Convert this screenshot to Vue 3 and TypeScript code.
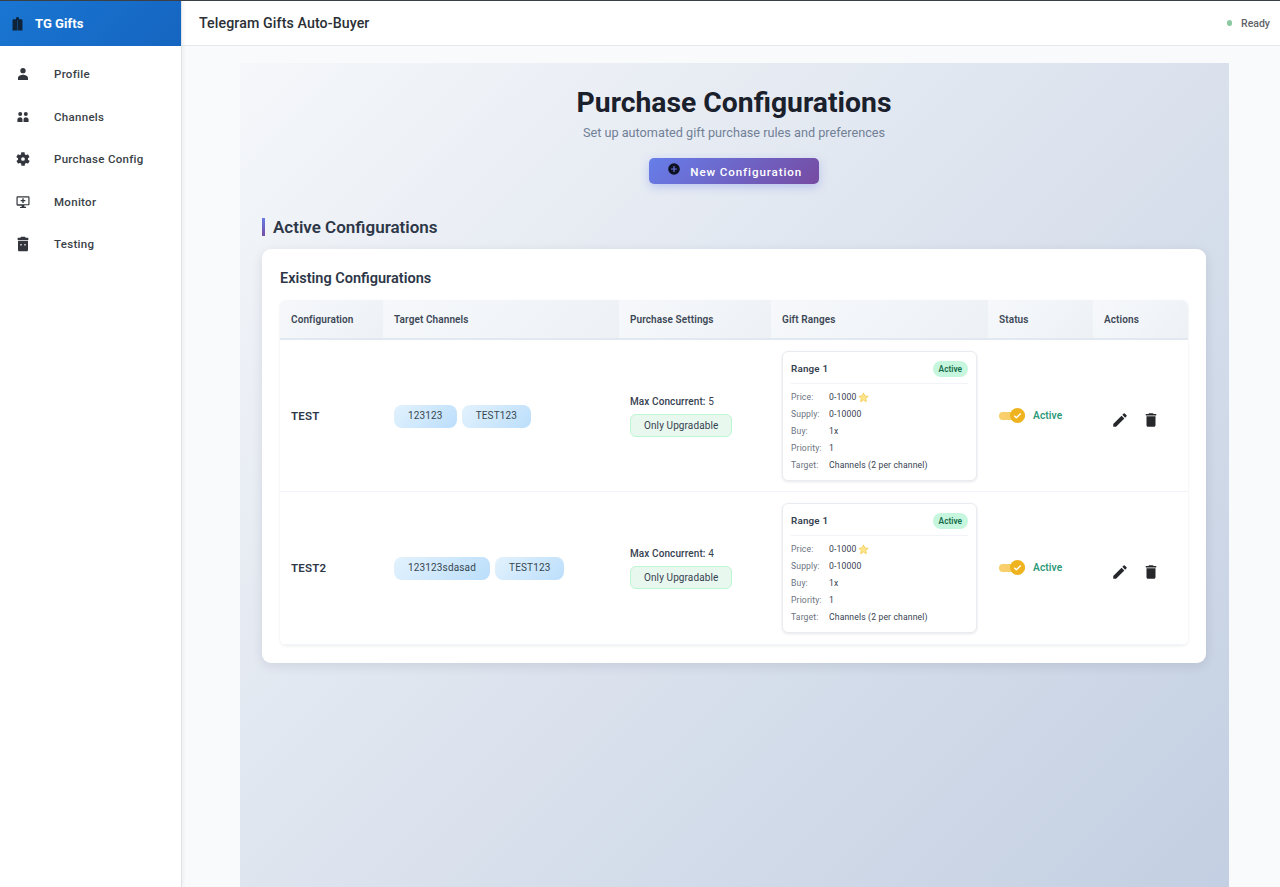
<script setup lang="ts">
interface Config {
  name: string
  channels: string[]
  maxConcurrent: number
}

const navItems = [
  { label: 'Profile', icon: 'M12 3a4 4 0 1 1 0 8 4 4 0 0 1 0-8zM4.500 21v-3.500c0-2.800 5-4.500 7.500-4.500s7.500 1.700 7.500 4.500V21z' },
  { label: 'Channels', icon: 'M7.800 4.500a3 3 0 1 1 0 6 3 3 0 0 1 0-6zm8.400 0a3 3 0 1 1 0 6 3 3 0 0 1 0-6zM3.600 19.500v-3.700c0-2 2.700-3.300 4.200-3.300s3.400 1.300 3.400 3.300v3.700zm9.200 0v-3.700c0-2 1.900-3.300 3.400-3.300s4.200 1.300 4.200 3.300v3.700z' },
  { label: 'Purchase Config', icon: 'M19.400 13c.1-.3.1-.7.1-1s0-.7-.1-1l2.100-1.600c.2-.1.2-.4.1-.6l-2-3.500c-.1-.2-.4-.3-.6-.2l-2.500 1c-.5-.4-1.100-.7-1.700-1l-.4-2.700c0-.2-.2-.4-.5-.4h-4c-.3 0-.5.2-.5.400l-.4 2.700c-.6.200-1.200.6-1.700 1l-2.500-1c-.2-.1-.5 0-.6.200l-2 3.500c-.1.200-.1.500.1.600L4.600 11c-.1.300-.1.700-.1 1s0 .7.1 1l-2.100 1.600c-.2.1-.2.4-.1.6l2 3.500c.1.2.4.3.6.2l2.500-1c.5.4 1.100.7 1.700 1l.4 2.700c0 .2.2.4.5.4h4c.3 0 .5-.2.5-.4l.4-2.700c.6-.2 1.200-.6 1.700-1l2.500 1c.2.1.5 0 .6-.2l2-3.500c.1-.2.1-.5-.1-.6L19.400 13zM12 14.800a2.800 2.800 0 1 1 0-5.600 2.800 2.800 0 0 1 0 5.600z' },
  { label: 'Monitor', icon: 'M4 3.500h16c1 0 1.800.8 1.800 1.800v9.900c0 1-.8 1.800-1.800 1.800h-6v2h2.500V21h-9v-1.500H10v-2H4c-1 0-1.800-.8-1.800-1.800V5.300c0-1 .8-1.800 1.800-1.800zm0 1.800v9.900h16V5.300zM11 6.500h2v2.500h2.500v2H13v2.500h-2V11H8.500V9H11z' },
  { label: 'Testing', icon: 'M9 1h6l1 1.500h4V6H4V2.500h4zM4.500 7h15v14c0 1.100-.9 2-2 2h-11c-1.100 0-2-.9-2-2zm4.500 7.500a1.200 1.200 0 1 0 0-2.400 1.200 1.200 0 0 0 0 2.400zm6 0a1.200 1.200 0 1 0 0-2.400 1.200 1.200 0 0 0 0 2.400z' }
]

const configs: Config[] = [
  { name: 'TEST', channels: ['123123', 'TEST123'], maxConcurrent: 5 },
  { name: 'TEST2', channels: ['123123sdasad', 'TEST123'], maxConcurrent: 4 }
]
</script>

<template>
  <div class="app-shell">
    <aside class="sidebar">
      <div class="brand">
        <svg class="brand-icon" viewBox="0 0 24 24"><path d="M10 3h4v3h3.500c.8 0 1.500.7 1.500 1.500V22H5V7.500C5 6.700 5.700 6 6.500 6H10V3zm1.700 4.500V22h.6V7.500z" fill-rule="evenodd" /></svg>
        <span>TG Gifts</span>
      </div>
      <nav class="nav">
        <div v-for="item in navItems" :key="item.label" class="nav-item">
          <svg class="nav-icon" viewBox="0 0 24 24"><path :d="item.icon" fill-rule="evenodd" /></svg>
          <span>{{ item.label }}</span>
        </div>
      </nav>
    </aside>

    <div class="main">
      <header class="topbar">
        <h1>Telegram Gifts Auto-Buyer</h1>
        <div class="status"><i class="dot"></i>Ready</div>
      </header>

      <div class="content">
        <section class="panel">
          <div class="hero">
            <h2>Purchase Configurations</h2>
            <p>Set up automated gift purchase rules and preferences</p>
            <button class="new-btn">
              <svg viewBox="0 0 24 24"><path d="M12 2a10 10 0 1 0 0 20 10 10 0 0 0 0-20zm5 11h-4v4h-2v-4H7v-2h4V7h2v4h4v2z" /></svg>
              <span>New Configuration</span>
            </button>
          </div>

          <h3 class="section-title">Active Configurations</h3>

          <div class="card">
            <h4>Existing Configurations</h4>
            <div class="table-wrap">
              <table>
                <colgroup>
                  <col style="width: 103px" />
                  <col style="width: 236px" />
                  <col style="width: 152px" />
                  <col style="width: 217px" />
                  <col style="width: 105px" />
                  <col style="width: 96px" />
                </colgroup>
                <thead>
                  <tr>
                    <th>Configuration</th>
                    <th>Target Channels</th>
                    <th>Purchase Settings</th>
                    <th>Gift Ranges</th>
                    <th>Status</th>
                    <th>Actions</th>
                  </tr>
                </thead>
                <tbody>
                  <tr v-for="cfg in configs" :key="cfg.name">
                    <td class="cfg-name">{{ cfg.name }}</td>
                    <td>
                      <div class="chips">
                        <span v-for="ch in cfg.channels" :key="ch" class="chip">{{ ch }}</span>
                      </div>
                    </td>
                    <td class="settings">
                      <div class="concurrent"><b>Max Concurrent:</b> {{ cfg.maxConcurrent }}</div>
                      <span class="upgradable">Only Upgradable</span>
                    </td>
                    <td>
                      <div class="range">
                        <div class="range-head">
                          <strong>Range 1</strong>
                          <span class="range-badge">Active</span>
                        </div>
                        <dl>
                          <dt>Price:</dt><dd>0-1000 <svg class="star" viewBox="0 0 24 24"><path d="M12 2l3 6.600 7.200.8-5.400 4.800 1.500 7.100L12 17.700l-6.300 3.600 1.500-7.100L1.800 9.400 9 8.600z" /></svg></dd>
                          <dt>Supply:</dt><dd>0-10000</dd>
                          <dt>Buy:</dt><dd>1x</dd>
                          <dt>Priority:</dt><dd>1</dd>
                          <dt>Target:</dt><dd>Channels (2 per channel)</dd>
                        </dl>
                      </div>
                    </td>
                    <td>
                      <div class="state">
                        <span class="switch">
                          <span class="knob">
                            <svg viewBox="0 0 24 24"><path d="M5 12.500l4.500 4.500L19 7.500" /></svg>
                          </span>
                        </span>
                        <span class="state-label">Active</span>
                      </div>
                    </td>
                    <td>
                      <div class="actions">
                        <svg viewBox="0 0 24 24"><path d="M3 17.250V21h3.750L17.810 9.940l-3.750-3.750L3 17.250zM20.710 7.040a1 1 0 0 0 0-1.410l-2.340-2.340a1 1 0 0 0-1.410 0l-1.830 1.830 3.750 3.750 1.830-1.830z" /></svg>
                        <svg viewBox="0 0 24 24"><path d="M6 19c0 1.100.9 2 2 2h8c1.100 0 2-.9 2-2V7H6v12zM19 4h-3.500l-1-1h-5l-1 1H5v2h14V4z" /></svg>
                      </div>
                    </td>
                  </tr>
                </tbody>
              </table>
            </div>
          </div>
        </section>
      </div>
    </div>
  </div>
</template>

<style>
html,
body {
  margin: 0;
  height: 100%;
}
</style>

<style scoped>
* {
  box-sizing: border-box;
}

.app-shell {
  display: flex;
  height: 887px;
  overflow: hidden;
  font-family: Roboto, 'Liberation Sans', sans-serif;
  color: #1f2937;
  background: #f8fafc;
  border-top: 1px solid #3b3f46;
}

.sidebar {
  flex: 0 0 182px;
  background: #fff;
  border-right: 1px solid #dfe3e8;
  box-shadow: 1px 0 4px rgba(15, 23, 42, 0.06);
  z-index: 2;
}

.brand {
  display: flex;
  align-items: center;
  gap: 9px;
  height: 45px;
  padding-left: 9px;
  background: linear-gradient(135deg, #1976d2, #1565c0);
  color: #fff;
  font-size: 13px;
  font-weight: 700;
  letter-spacing: 0.05px;
}

.brand-icon {
  width: 17px;
  height: 17px;
  fill: #0e2238;
}

.nav {
  display: flex;
  flex-direction: column;
  padding-top: 7px;
}

.nav-item {
  display: flex;
  align-items: center;
  gap: 23px;
  height: 42.500px;
  padding-left: 15px;
  font-size: 11.500px;
  font-weight: 500;
  letter-spacing: 0.3px;
  color: #3a3f47;
}

.nav-icon {
  width: 16px;
  height: 16px;
  fill: #33373d;
}

.main {
  flex: 1;
  min-width: 0;
  display: flex;
  flex-direction: column;
}

.topbar {
  display: flex;
  align-items: center;
  justify-content: space-between;
  height: 45px;
  flex: none;
  padding: 0 10px 0 17px;
  background: #fff;
  border-bottom: 1px solid #e5e8ec;
}

.topbar h1 {
  margin: 0;
  font-size: 14.200px;
  font-weight: 500;
  letter-spacing: 0.1px;
  color: #2b2f36;
}

.status {
  display: flex;
  align-items: center;
  gap: 9px;
  font-size: 10.500px;
  font-weight: 500;
  color: #5f6368;
}

.dot {
  width: 5.500px;
  height: 5.500px;
  border-radius: 50%;
  background: #8cc9a0;
}

.content {
  flex: 1;
  min-height: 0;
  padding: 17px 51px 0 58px;
}

.panel {
  height: 100%;
  padding: 0 23px 0 22px;
  background: linear-gradient(135deg, #f5f7fa 0%, #c3cfe2 100%);
}

.hero {
  display: flex;
  flex-direction: column;
  align-items: center;
  padding-top: 22px;
}

.hero h2 {
  margin: 0;
  font-size: 28.300px;
  line-height: 36px;
  font-weight: 700;
  color: #1a202c;
}

.hero p {
  margin: 3px 0 0;
  font-size: 12.700px;
  line-height: 17px;
  color: #718096;
}

.new-btn {
  display: flex;
  align-items: center;
  gap: 9px;
  height: 25.500px;
  width: 169.500px;
  margin-top: 17px;
  padding: 0 0 0 18px;
  border: 0;
  border-radius: 5px;
  background: linear-gradient(135deg, #667eea, #764ba2);
  box-shadow: 0 3px 10px rgba(102, 126, 234, 0.35);
  color: #fff;
  font-family: inherit;
  font-size: 11.600px;
  font-weight: 500;
  letter-spacing: 0.9px;
}

.new-btn span {
  padding-top: 2px;
}

.new-btn svg {
  width: 14px;
  height: 14px;
  margin-top: -4px;
  fill: #0f1222;
}

.section-title {
  margin: 34.500px 0 0;
  padding-left: 8px;
  border-left: 3px solid #667eea;
  border-image: linear-gradient(#667eea, #764ba2) 1;
  font-size: 17px;
  line-height: 18px;
  font-weight: 600;
  color: #2d3748;
}

.card {
  margin-top: 13px;
  padding: 19px 18px 18px;
  background: #fff;
  border-radius: 9px;
  box-shadow: 0 3px 12px rgba(15, 23, 42, 0.1);
}

.card h4 {
  margin: 0 0 10px;
  font-size: 14.500px;
  line-height: 22px;
  font-weight: 600;
  color: #2d3748;
}

.table-wrap {
  border-radius: 6px;
  overflow: hidden;
  box-shadow: 0 1px 3px rgba(15, 23, 42, 0.08);
}

table {
  width: 909px;
  table-layout: fixed;
  border-collapse: collapse;
}

th {
  height: 39px;
  padding: 0 11px;
  text-align: left;
  font-size: 10px;
  font-weight: 600;
  letter-spacing: 0.1px;
  color: #3d4856;
  background: linear-gradient(135deg, #f6f8fb, #edf1f6);
  border-bottom: 2px solid #e2e8f0;
}

td {
  height: 152.500px;
  padding: 0 11px;
  vertical-align: middle;
  font-size: 10px;
  border-bottom: 1px solid #f1f5f9;
}

.cfg-name {
  font-size: 11.500px;
  font-weight: 600;
  letter-spacing: 0.2px;
  color: #2d3748;
}

.settings {
  padding-top: 2px;
}

.chips {
  display: flex;
  gap: 5px;
  margin-top: 1px;
}

.chip {
  height: 23px;
  line-height: 22px;
  padding: 0 14px;
  border-radius: 8px;
  background: linear-gradient(135deg, #e3f2fd, #bbdefb);
  font-size: 10px;
  letter-spacing: 0.15px;
  color: #37474f;
}

.concurrent {
  margin-bottom: 7px;
  color: #374151;
  letter-spacing: 0.1px;
}

.concurrent b {
  font-weight: 500;
}

.upgradable {
  display: inline-block;
  height: 23px;
  line-height: 21px;
  padding: 0 13px;
  border-radius: 6px;
  border: 1px solid #bbf7d0;
  background: #e8f8ee;
  letter-spacing: 0.1px;
  color: #374151;
}

.range {
  height: 130px;
  padding: 9px 8px 0;
  border: 1px solid #e8ecf1;
  border-radius: 6px;
  box-shadow: 0 1px 3px rgba(15, 23, 42, 0.1);
  background: #fff;
}

.range-head {
  display: flex;
  align-items: center;
  justify-content: space-between;
  padding-bottom: 6px;
  border-bottom: 1px solid #f1f3f6;
}

.range-head strong {
  font-size: 9.800px;
  font-weight: 600;
  letter-spacing: 0.2px;
  color: #374151;
}

.range-badge {
  height: 16px;
  line-height: 16px;
  padding: 0 6px;
  border-radius: 8px;
  background: #c6f6dd;
  font-size: 8.300px;
  font-weight: 600;
  color: #146c4a;
}

dl {
  display: grid;
  grid-template-columns: 38px 1fr;
  grid-auto-rows: 17px;
  margin: 5.500px 0 0;
  font-size: 8.600px;
  line-height: 17px;
}

dt {
  color: #6b7280;
  letter-spacing: 0.15px;
  white-space: nowrap;
}

dd {
  display: flex;
  align-items: center;
  gap: 2px;
  margin: 0;
  color: #374151;
  letter-spacing: 0.15px;
  white-space: nowrap;
}

.star {
  width: 11px;
  height: 11px;
  fill: #fde68a;
  stroke: #f5c542;
  stroke-width: 1.500;
}

.state {
  display: flex;
  align-items: center;
  gap: 8px;
}

.switch {
  position: relative;
  width: 26px;
  height: 8px;
  border-radius: 4px;
  background: #f8cf6a;
}

.knob {
  position: absolute;
  right: 0;
  top: -3.500px;
  display: flex;
  align-items: center;
  justify-content: center;
  width: 15px;
  height: 15px;
  border-radius: 50%;
  background: #eeb31e;
}

.knob svg {
  width: 11px;
  height: 11px;
  fill: none;
  stroke: #fff;
  stroke-width: 3;
}

.state-label {
  font-size: 10.200px;
  font-weight: 600;
  letter-spacing: 0.1px;
  color: #2e9a78;
}

.actions {
  display: flex;
  gap: 13px;
  padding: 9px 0 0 7px;
}

.actions svg {
  width: 18px;
  height: 18px;
  fill: #26282c;
}
</style>
